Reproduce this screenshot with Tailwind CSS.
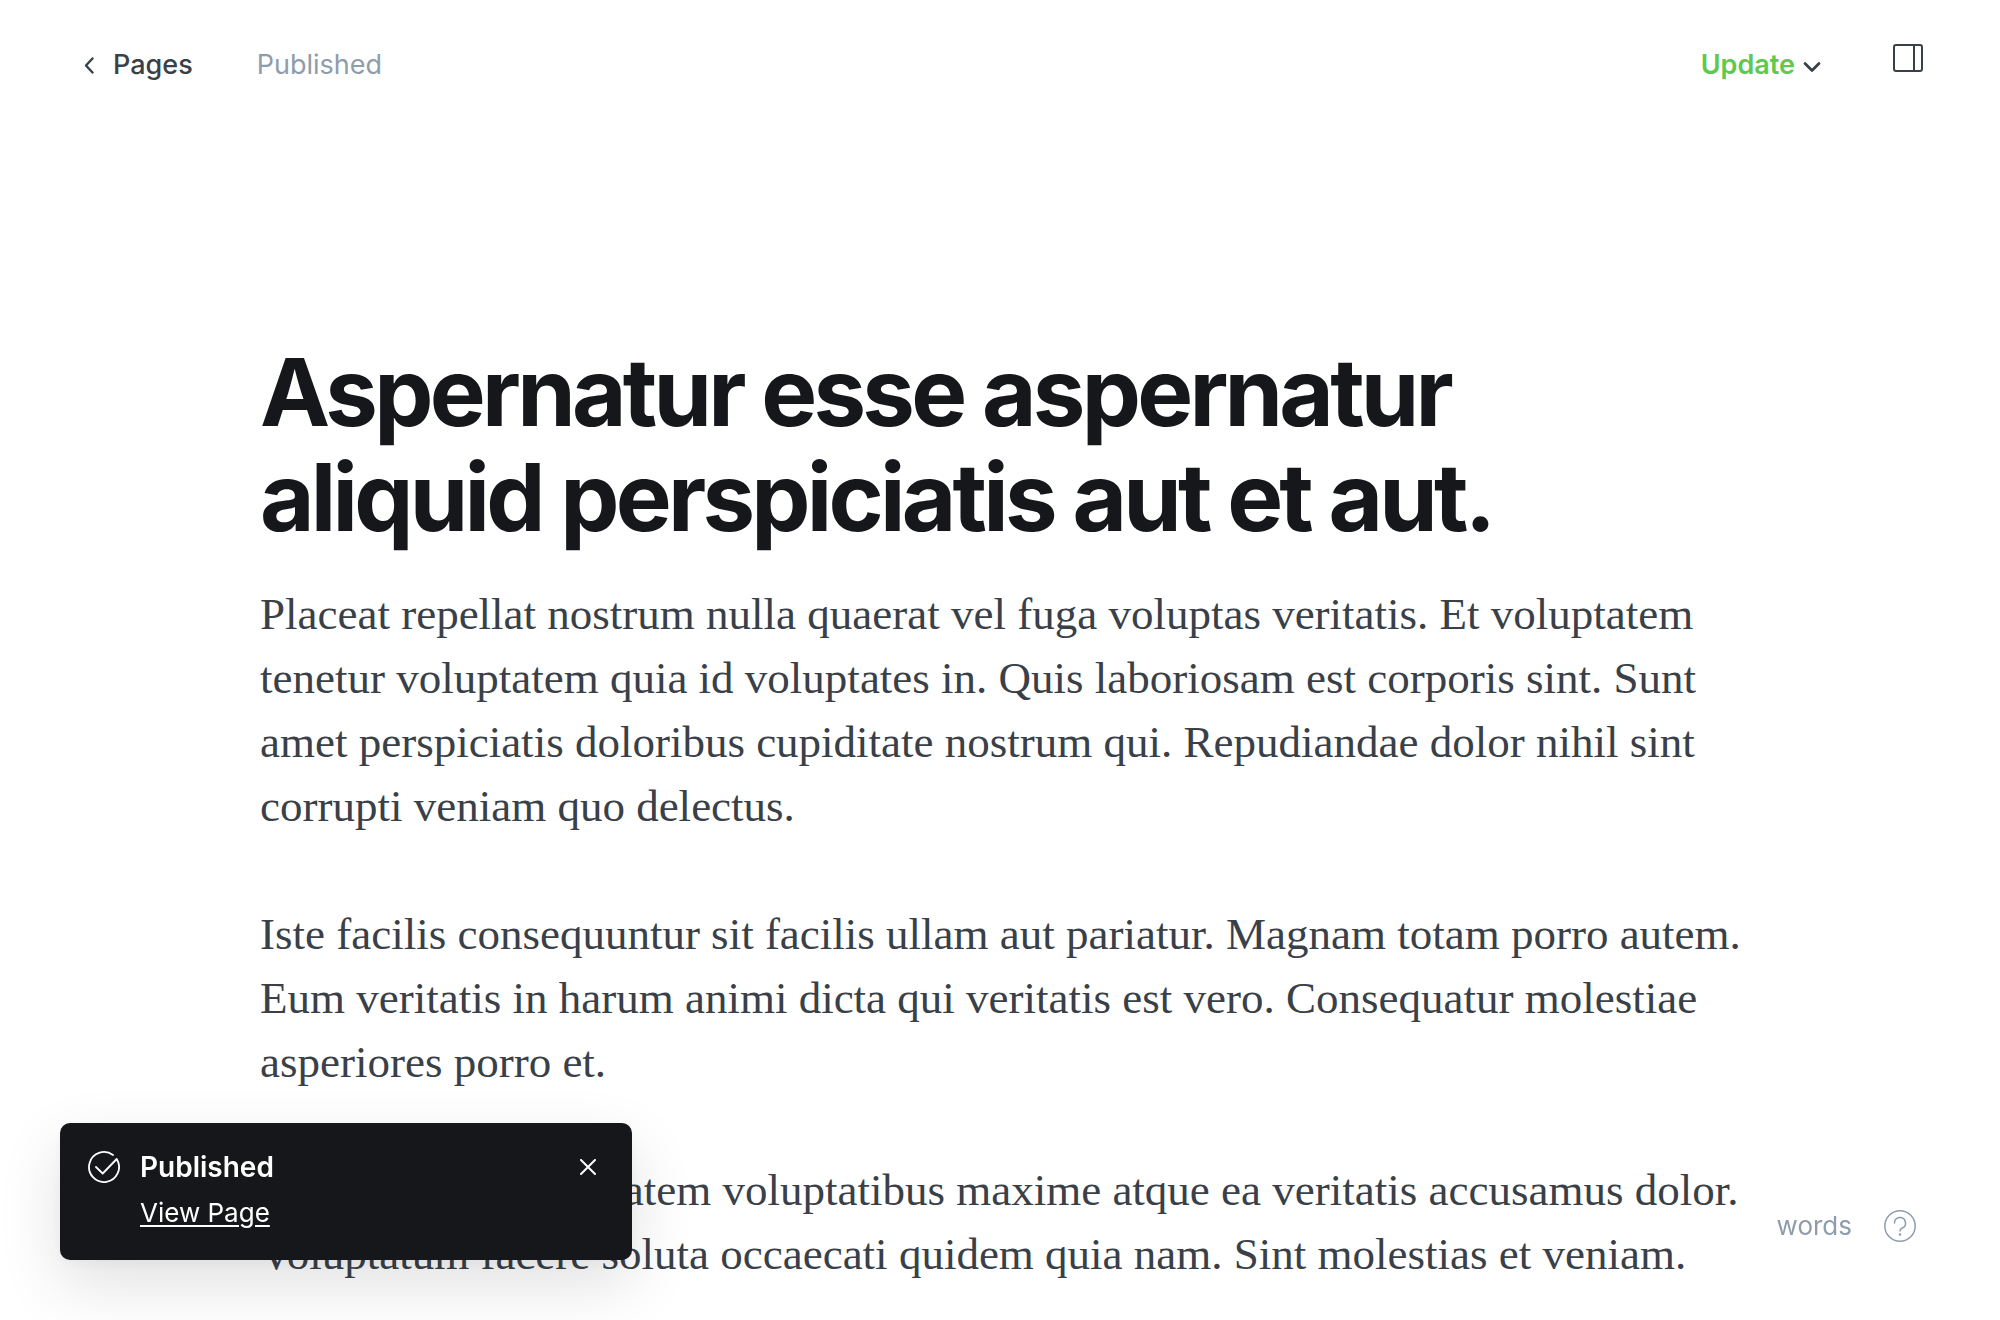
<!DOCTYPE html>
<html lang="en">
<head>
<meta charset="utf-8">
<meta name="viewport" content="width=device-width, initial-scale=1">
<title>Edit page</title>
<script src="https://cdn.jsdelivr.net/npm/@tailwindcss/browser@4"></script>
</head>
<body class="h-screen overflow-hidden bg-white font-['Inter',sans-serif] text-[27px] leading-8 text-[#394047]">
  <header class="flex h-[130px] items-center justify-between pr-[77px] pl-20">
    <nav class="flex items-center gap-16">
      <a href="#pages" class="flex items-center gap-[17px] font-medium">
        <svg class="h-5 w-4" viewBox="0 0 16 20" fill="none" stroke="currentColor" stroke-width="2.4" stroke-linecap="round" stroke-linejoin="round" aria-hidden="true"><path d="M12.500 3.500 6 10.500 12.500 17.500"/></svg>
        Pages
      </a>
      <span class="text-[#8e9cac]">Published</span>
    </nav>
    <div class="flex items-center gap-[72px]">
      <button type="button" class="flex items-center gap-2 font-semibold text-[#5dc94f]">
        Update
        <svg class="mt-1 h-5 w-[18px] text-[#394047]" viewBox="0 0 18 20" fill="none" stroke="currentColor" stroke-width="2.8" stroke-linecap="round" stroke-linejoin="round" aria-hidden="true"><path d="m2 6.500 7 7 7-7"/></svg>
      </button>
      <button type="button" aria-label="Settings" class="mb-3.5">
        <svg class="h-7 w-[30px]" viewBox="0 0 30 28" fill="none" stroke="currentColor" stroke-width="2" stroke-linejoin="round" aria-hidden="true"><rect x="1" y="1" width="28" height="26" rx="2"/><path d="M21 1v26"/></svg>
      </button>
    </div>
  </header>

  <main class="mx-auto w-full max-w-[1480px] pt-[210px]">
    <h1 class="max-w-[1300px] text-[94px] leading-[105px] font-bold tracking-[-0.04em] text-[#15171a]">Aspernatur esse aspernatur aliquid perspiciatis aut et aut.</h1>
    <div class="mt-8 space-y-16 font-['Liberation_Serif',serif] text-[45px] leading-[64px] whitespace-nowrap">
      <p>Placeat repellat nostrum nulla quaerat vel fuga voluptas veritatis. Et voluptatem<br>tenetur voluptatem quia id voluptates in. Quis laboriosam est corporis sint. Sunt<br>amet perspiciatis doloribus cupiditate nostrum qui. Repudiandae dolor nihil sint<br>corrupti veniam quo delectus.</p>
      <p>Iste facilis consequuntur sit facilis ullam aut pariatur. Magnam totam porro autem.<br>Eum veritatis in harum animi dicta qui veritatis est vero. Consequatur molestiae<br>asperiores porro et.</p>
      <p>Sit quia unde voluptatem voluptatibus maxime atque ea veritatis accusamus dolor.<br>Voluptatum facere soluta occaecati quidem quia nam. Sint molestias et veniam.</p>
    </div>
  </main>

  <aside role="status" class="fixed bottom-[60px] left-[60px] flex h-[137px] w-[572px] items-start gap-5 rounded-[10px] bg-[#15171a] px-7 pt-7 text-white shadow-[0_24px_64px_rgba(0,0,0,0.12),0_4px_14px_rgba(0,0,0,0.04)]">
    <svg class="h-8 w-8 shrink-0" viewBox="0 0 32 32" fill="none" stroke="currentColor" stroke-width="1.8" stroke-linecap="round" stroke-linejoin="round" aria-hidden="true"><path d="M25 4A15 15 0 1 0 28.700 8L14.700 22.500 8 16"/></svg>
    <div class="flex grow flex-col items-start gap-3.5">
      <p class="text-[28px] font-semibold">Published</p>
      <a href="#view" class="text-[26px] underline decoration-2 underline-offset-3">View Page</a>
    </div>
    <button type="button" aria-label="Close" class="flex h-8 w-8 items-center justify-center">
      <svg class="h-4 w-4" viewBox="0 0 16 16" fill="none" stroke="currentColor" stroke-width="2" stroke-linecap="round" aria-hidden="true"><path d="m1 1 14 14M15 1 1 15"/></svg>
    </button>
  </aside>

  <footer class="fixed right-[84px] bottom-[78px] flex items-center gap-8 text-[26px] text-[#8e9cac]">
    <span>words</span>
    <a href="#help" aria-label="Help">
      <svg class="h-8 w-8" viewBox="0 0 32 32" fill="none" stroke="currentColor" stroke-width="1.5" stroke-linecap="round" stroke-linejoin="round" aria-hidden="true"><circle cx="16" cy="16" r="15.200"/><path d="M10.500 13a5.500 5.500 0 1 1 7.800 5c-1.500.7-2.300 1.500-2.300 3"/><circle cx="16" cy="24.500" r=".6" fill="currentColor"/></svg>
    </a>
  </footer>
</body>
</html>
